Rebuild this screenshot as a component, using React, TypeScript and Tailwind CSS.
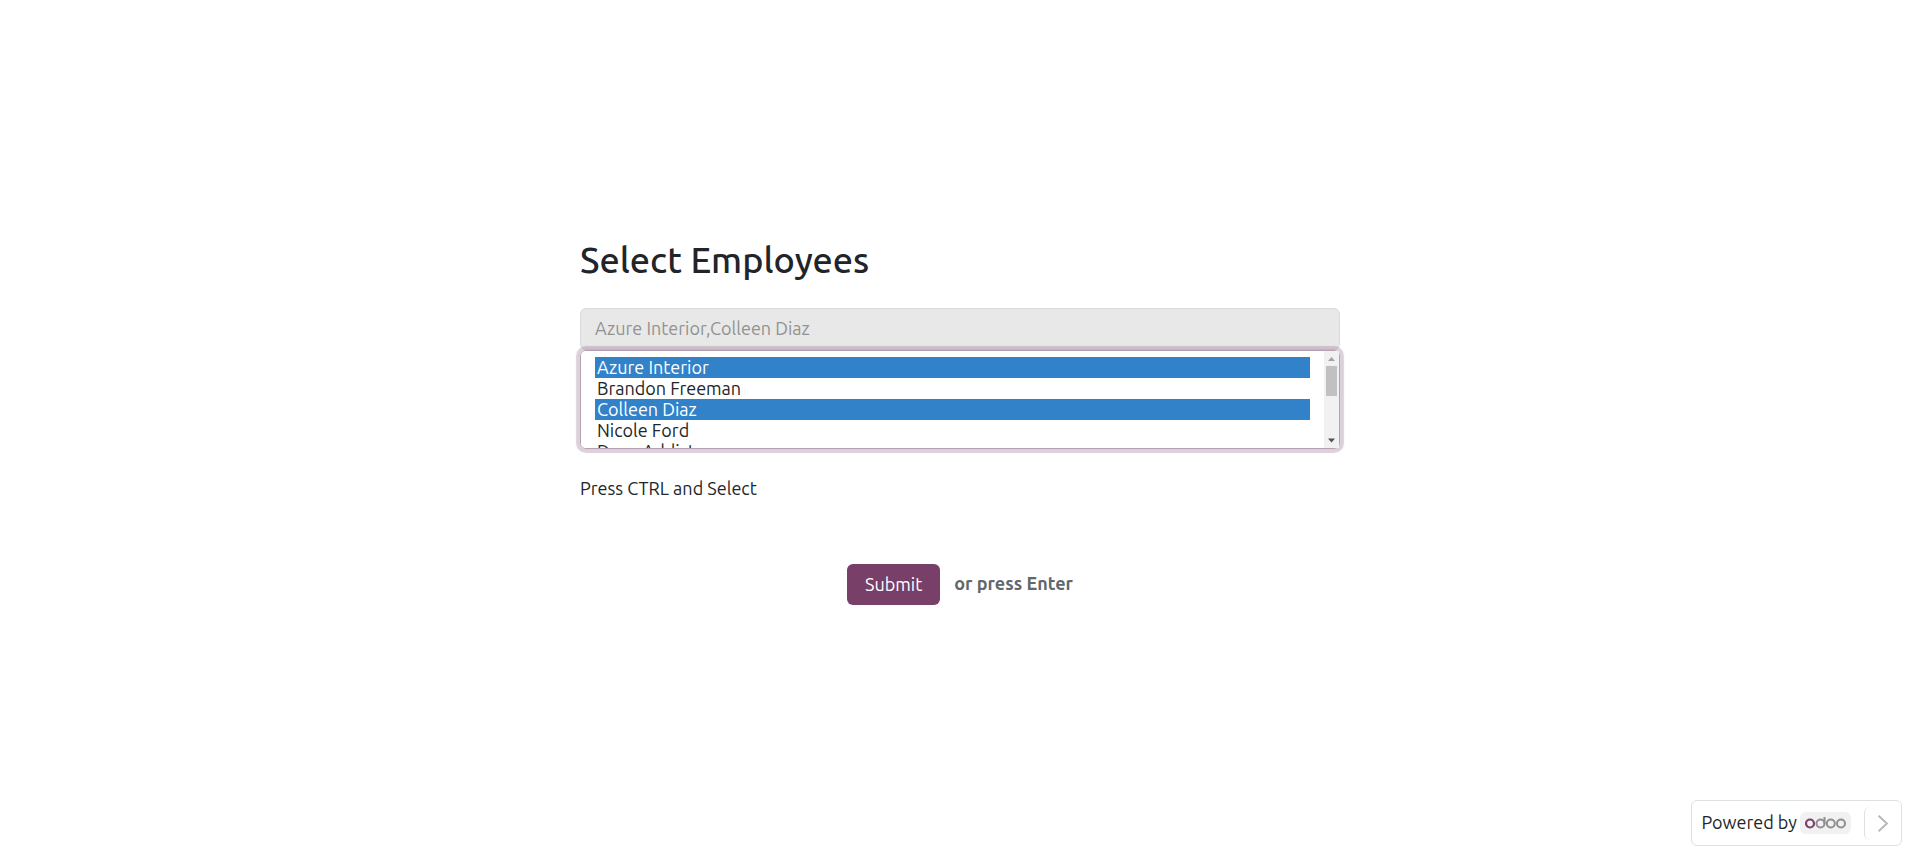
import { useState } from "react";

const EMPLOYEES = [
  "Azure Interior",
  "Brandon Freeman",
  "Colleen Diaz",
  "Nicole Ford",
  "Deco Addict",
  "Addison Olson",
  "Douglas Fletcher",
  "Floyd Steward",
  "Gemini Furniture",
  "Edwin Hansen",
  "Jesse Brown",
  "Oscar Morgan",
];

function OdooLogo() {
  return (
    <svg viewBox="0 0 41 12" className="h-3 w-[41px]" fill="none" strokeWidth="2" role="img" aria-label="odoo">
      <circle cx="5" cy="6.5" r="4" stroke="#7d3f6b" strokeWidth="2.2" />
      <circle cx="15.5" cy="6.5" r="4" stroke="#8f8f8f" />
      <path d="M19.5 0v7" stroke="#8f8f8f" />
      <circle cx="25.8" cy="6.5" r="4" stroke="#8f8f8f" />
      <circle cx="36" cy="6.5" r="4" stroke="#8f8f8f" />
    </svg>
  );
}

function ScrollTrack() {
  return (
    <div
      aria-hidden="true"
      className="pointer-events-none absolute inset-y-px right-px flex w-[15px] flex-col items-center bg-[#f1f1f1]"
    >
      <svg viewBox="0 0 15 15" className="h-[15px] w-[15px]" fill="#a3a3a3">
        <path d="M4 10L7.5 6L11 10z" />
      </svg>
      <div className="h-[30px] w-[11px] bg-[#c1c1c1]" />
      <svg viewBox="0 0 15 15" className="mt-auto h-[15px] w-[15px]" fill="#505050">
        <path d="M4 5.500L7.500 9.500L11 5.500z" />
      </svg>
    </div>
  );
}

export default function App() {
  const [selected, setSelected] = useState<string[]>(["Azure Interior", "Colleen Diaz"]);

  return (
    <div className="flex min-h-screen flex-col bg-white font-['Ubuntu','Noto_Sans',sans-serif] text-[18px] leading-[26px] text-[#212529]">
      <main className="mx-auto w-full max-w-[760px] pt-[238px]">
        <form onSubmit={(e) => e.preventDefault()}>
          <h1 className="mb-[26px] text-[36px] leading-[44px] font-medium">
            <label htmlFor="employees">Select Employees</label>
          </h1>
          <input
            type="text"
            disabled
            aria-label="Selected employees"
            value={selected.join(",")}
            className="block h-[42px] w-full rounded-md border border-[#d8dadd] bg-[#e8e8e8] px-[14px] pb-[2px] text-[#929292]"
          />
          <div className="relative">
            <select
              id="employees"
              multiple
              value={selected}
              onChange={(e) => setSelected(Array.from(e.target.selectedOptions, (o) => o.value))}
              className="block h-[99px] w-full overflow-y-scroll rounded-md border border-[#b89fb3] bg-white py-[6px] pr-[29px] pl-[14px] shadow-[0_0_1px_4px_#714b6740] outline-none"
            >
              {EMPLOYEES.map((name) => (
                <option
                  key={name}
                  value={name}
                  className="h-[21px] min-h-[21px] px-[2px] pt-0 pb-px leading-5 checked:bg-[#3182c9] checked:bg-[linear-gradient(#3182c9,#3182c9)] checked:text-white"
                >
                  {name}
                </option>
              ))}
            </select>
            <ScrollTrack />
          </div>
          <p className="mt-[26px]">Press CTRL and Select</p>
          <div className="mt-[63px] flex items-center justify-center gap-[14px]">
            <button type="submit" className="h-[41px] rounded-md bg-[#783f68] px-[18px] pb-[2px] text-white">
              Submit
            </button>
            <span className="pb-1 font-bold text-[#62676b]">or press Enter</span>
          </div>
        </form>
      </main>
      <footer className="mt-auto mr-[18px] mb-[17px] flex h-[46px] items-center self-end rounded-md border border-[#dee0e2] pl-[9px]">
        <span className="pb-[2px]">Powered by</span>
        <a href="#odoo" className="ml-[3px] flex h-[22px] items-center rounded-md bg-[#f1f1f1] px-[5px]">
          <OdooLogo />
        </a>
        <button type="button" aria-label="Next" className="ml-[13px] h-[33px] w-[37px] rounded-md border-l border-[#dee0e2]">
          <svg viewBox="0 0 37 33" className="h-[33px] w-9" fill="none" stroke="#b5b8ba" strokeWidth="2">
            <path d="M14 8.5l8.5 8-8.5 8" />
          </svg>
        </button>
      </footer>
    </div>
  );
}
